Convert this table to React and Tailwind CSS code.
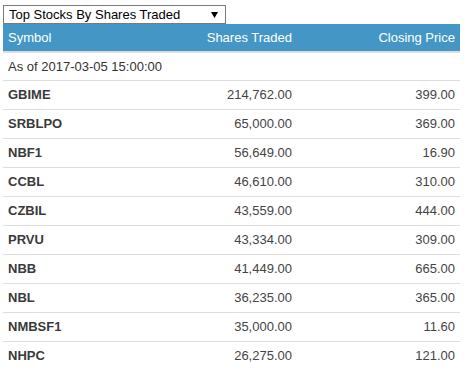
const rows = [
  ['GBIME', '214,762.00', '399.00'],
  ['SRBLPO', '65,000.00', '369.00'],
  ['NBF1', '56,649.00', '16.90'],
  ['CCBL', '46,610.00', '310.00'],
  ['CZBIL', '43,559.00', '444.00'],
  ['PRVU', '43,334.00', '309.00'],
  ['NBB', '41,449.00', '665.00'],
  ['NBL', '36,235.00', '365.00'],
  ['NMBSF1', '35,000.00', '11.60'],
  ['NHPC', '26,275.00', '121.00'],
]

const App = () => {
  return (
    <div className="min-h-screen bg-white pl-[3px] pt-[5px] text-[13px] text-[#333] font-['Liberation_Sans',Arial,sans-serif]">
      <div className="w-[223px] h-[19px] border border-[#7a7a7a] bg-white flex items-center justify-between pl-[5px] pr-[7px] leading-none text-[13px] text-black">
        <span>Top Stocks By Shares Traded</span>
        <svg width="7" height="6" viewBox="0 0 7 6">
          <path d="M0 0H7L3.5 6Z" fill="#000" />
        </svg>
      </div>
      <table className="w-[457px] border-collapse">
        <thead>
          <tr className="bg-[#4497c5] text-white text-[13px]">
            <th className="w-[147px] h-[28px] px-[5px] font-normal text-left border-b-2 border-[#ddd]">Symbol</th>
            <th className="w-[147px] px-[5px] font-normal text-right border-b-2 border-[#ddd]">Shares Traded</th>
            <th className="px-[5px] font-normal text-right border-b-2 border-[#ddd]">Closing Price</th>
          </tr>
        </thead>
        <tbody>
          <tr>
            <td colSpan={3} className="h-[28px] px-[5px] border-b border-[#ddd]">As of 2017-03-05 15:00:00</td>
          </tr>
          {rows.map(([sym, shares, price]) => (
            <tr key={sym} className="h-[29px] border-b border-[#ddd]">
              <td className="px-[5px] font-bold text-[#3a3a3a]">{sym}</td>
              <td className="px-[5px] text-right text-[#444]">{shares}</td>
              <td className="px-[5px] text-right text-[#444]">{price}</td>
            </tr>
          ))}
        </tbody>
      </table>
    </div>
  )
}

export default App
